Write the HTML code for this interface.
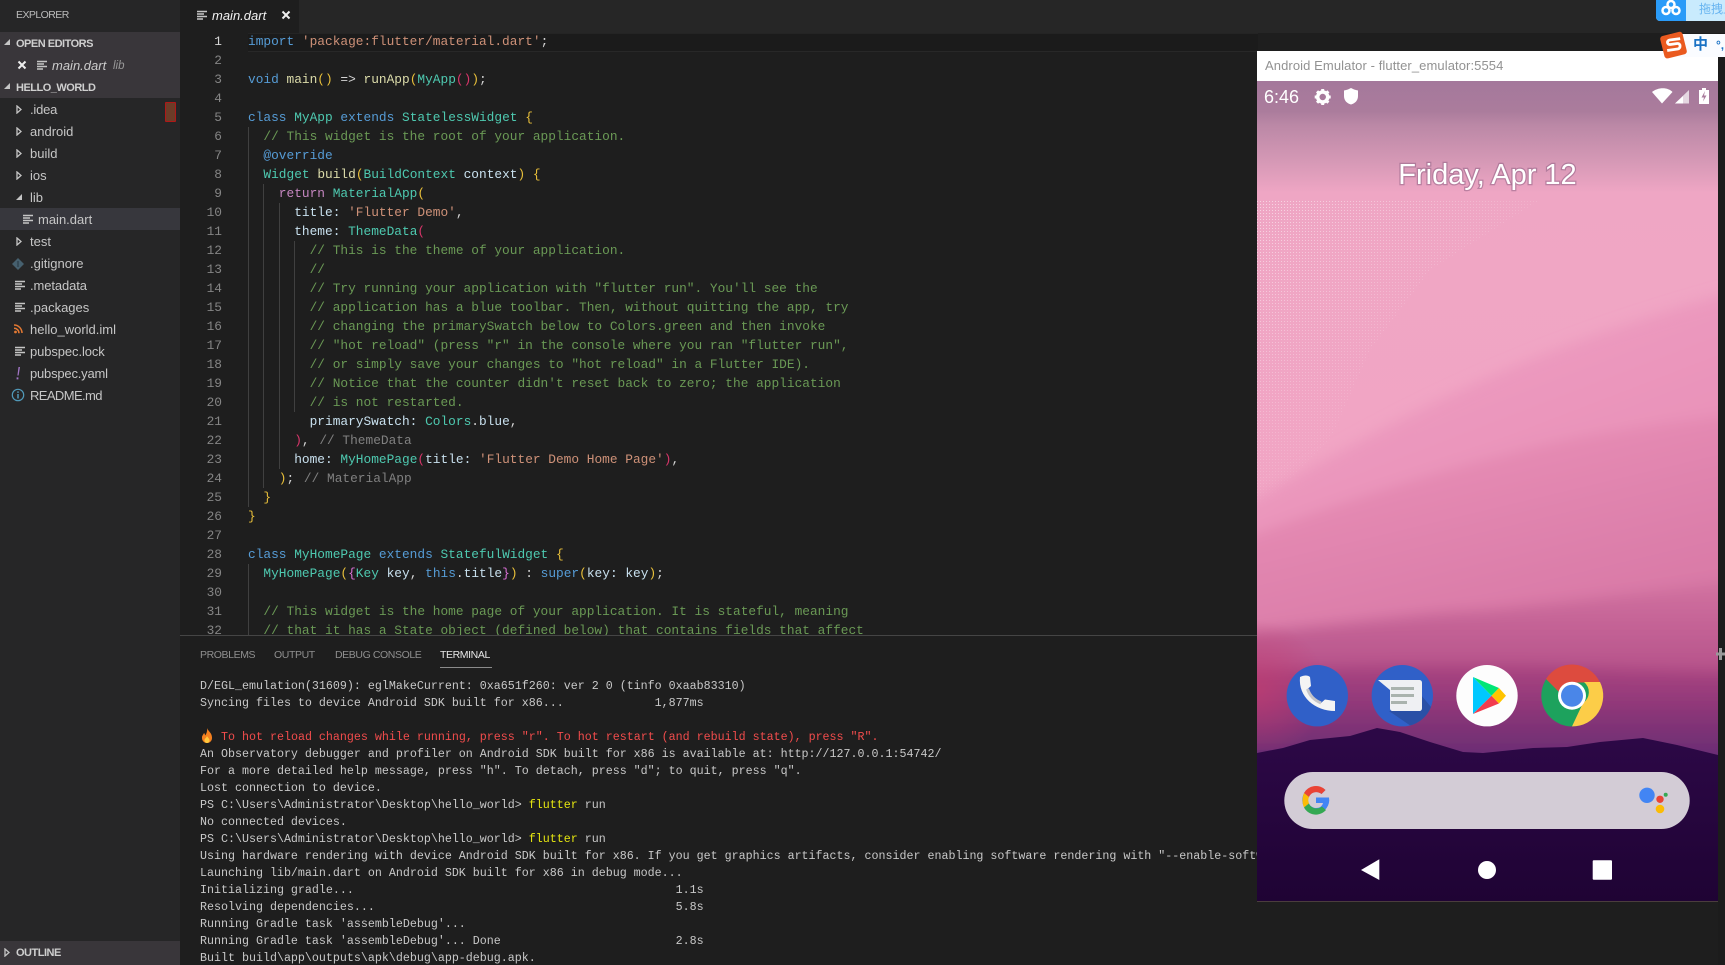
<!DOCTYPE html>
<html><head><meta charset="utf-8"><style>
html,body{margin:0;padding:0;background:#1e1e1e;width:1725px;height:965px;overflow:hidden}
#r{position:relative;width:1725px;height:965px;overflow:hidden;font-family:"Liberation Sans",sans-serif}
#r div,#r svg{position:absolute}
.side{left:0;top:0;width:180px;height:965px;background:#262627}
.hd{left:0;width:180px;background:#39363a}
.s{white-space:pre;font-size:13px;line-height:22px;height:22px;color:#c6c6c6;margin-top:1px}
.h{white-space:pre;font-weight:bold;font-size:11px;letter-spacing:-.5px;line-height:22px;height:22px;color:#cfcfcf;left:16px;margin-top:1px}
.code{left:248px;height:19px;line-height:19px;font:12.83px/19px "Liberation Mono",monospace;white-space:pre;color:#d4d4d4}
.n{left:190px;width:32px;text-align:right;height:19px;font:12.83px/19px "Liberation Mono",monospace;color:#858585}
.g{width:1px;background:#404040}
.t{left:200px;height:17px;font:11.67px/17px "Liberation Mono",monospace;white-space:pre;color:#c8c8c8;margin-top:1px}
.k{color:#569cd6}.st{color:#ce9178}.ty{color:#4ec9b0}.f{color:#dcdcaa}.c{color:#6a9955}.r{color:#c586c0}.v{color:#c8e0ee}
.y{color:#e8bf3a}.p{color:#d8356a}.m{color:#da70d6}.l{color:#808080;margin-left:2px}
.tab{top:645px;font-size:10.5px;line-height:18px;height:18px;letter-spacing:-.4px;color:#8f8f8f;white-space:pre;margin-top:1px}
.yl{color:#e5e510}
</style></head><body><div id="r">
<svg width="0" height="0" style="left:0;top:0"><defs>
<g id="fi"><path d="M0 1.500h10M0 4h7M0 6.500h10M0 9h6" stroke="#c5c5c5" stroke-width="1.500" fill="none"/></g>
<g id="ar"><path d="M1 1l4 3.500-4 3.500z" fill="none" stroke="#c5c5c5" stroke-width="1.300"/></g>
<g id="ad"><path d="M6 0v6H0z" fill="#c5c5c5"/></g>
</defs></svg>

<!-- tab bar -->
<div style="left:180px;top:0;width:1545px;height:33px;background:#262626"></div>
<div style="left:180px;top:0;width:119px;height:33px;background:#1e1e1e"></div>
<svg style="left:197px;top:10px" width="11" height="11"><use href="#fi"/></svg>
<div class="s" style="left:212px;top:4px;color:#f2f2f2;font-style:italic;font-size:13px">main.dart</div>
<svg style="left:281px;top:10px" width="10" height="10"><path d="M1.500 1.500l7 7M8.500 1.500l-7 7" stroke="#eee" stroke-width="2"/></svg>

<!-- sidebar -->
<div class="side"></div>
<div class="s" style="left:16px;top:3px;font-size:10.500px;letter-spacing:-.55px;color:#bbb">EXPLORER</div>
<div class="hd" style="top:32px;height:66px"></div>
<div class="hd" style="top:941px;height:24px"></div>
<div style="left:0;top:208px;width:180px;height:22px;background:#37373d"></div>
<svg style="left:4px;top:39px" width="7" height="7"><use href="#ad"/></svg>
<div class="h" style="top:32px">OPEN EDITORS</div>
<svg style="left:17px;top:60px" width="10" height="10"><path d="M1.500 1.500l7 7M8.500 1.500l-7 7" stroke="#eee" stroke-width="2"/></svg>
<svg style="left:37px;top:60px" width="11" height="11"><use href="#fi"/></svg>
<div class="s" style="left:52px;top:54px;font-style:italic;color:#ccc">main.dart</div>
<div class="s" style="left:113px;top:54px;font-style:italic;color:#999;font-size:11.500px">lib</div>
<svg style="left:4px;top:83px" width="7" height="7"><use href="#ad"/></svg>
<div class="h" style="top:76px">HELLO_WORLD</div>

<svg style="left:16px;top:105px" width="7" height="9"><use href="#ar"/></svg><div class="s" style="left:30px;top:98px;letter-spacing:-.2px">.idea</div>
<div style="left:165px;top:102px;width:9px;height:18px;background:#6c3c28;border:1px solid #b01818;border-radius:1px"></div>
<svg style="left:16px;top:127px" width="7" height="9"><use href="#ar"/></svg><div class="s" style="left:30px;top:120px">android</div>
<svg style="left:16px;top:149px" width="7" height="9"><use href="#ar"/></svg><div class="s" style="left:30px;top:142px">build</div>
<svg style="left:16px;top:171px" width="7" height="9"><use href="#ar"/></svg><div class="s" style="left:30px;top:164px">ios</div>
<svg style="left:16px;top:194px" width="7" height="7"><use href="#ad"/></svg><div class="s" style="left:30px;top:186px">lib</div>
<svg style="left:23px;top:214px" width="11" height="11"><use href="#fi"/></svg><div class="s" style="left:38px;top:208px">main.dart</div>
<svg style="left:16px;top:237px" width="7" height="9"><use href="#ar"/></svg><div class="s" style="left:30px;top:230px">test</div>
<svg style="left:12px;top:258px" width="12" height="12"><path d="M6 0l6 6-6 6-6-6z" fill="#46606f"/><path d="M6 3v6" stroke="#2c3e4a" stroke-width="1.300"/></svg><div class="s" style="left:30px;top:252px">.gitignore</div>
<svg style="left:15px;top:280px" width="11" height="11"><use href="#fi"/></svg><div class="s" style="left:30px;top:274px;letter-spacing:-.1px">.metadata</div>
<svg style="left:15px;top:302px" width="11" height="11"><use href="#fi"/></svg><div class="s" style="left:30px;top:296px">.packages</div>
<svg style="left:14px;top:324px" width="9" height="10"><circle cx="1.500" cy="8" r="1.400" fill="#e37933"/><path d="M0 4.200a5 5 0 0 1 5 5M0 1a8 8 0 0 1 8 8" stroke="#e37933" stroke-width="1.500" fill="none"/></svg><div class="s" style="left:30px;top:318px">hello_world.iml</div>
<svg style="left:15px;top:346px" width="11" height="11"><use href="#fi"/></svg><div class="s" style="left:30px;top:340px;letter-spacing:-.1px">pubspec.lock</div>
<svg style="left:15px;top:367px" width="6" height="13"><path d="M3.500 0L5 0 3.600 8.500H2.400zM1.600 10.400h1.800v2H1.600z" fill="#a074c4"/></svg><div class="s" style="left:30px;top:362px;letter-spacing:-.2px">pubspec.yaml</div>
<svg style="left:11px;top:388px" width="14" height="14"><circle cx="7" cy="7" r="5.700" fill="none" stroke="#519aba" stroke-width="1.200"/><path d="M7 6v4.500M7 3.400v1.500" stroke="#519aba" stroke-width="1.500"/></svg><div class="s" style="left:30px;top:384px;letter-spacing:-.6px">README.md</div>
<svg style="left:4px;top:948px" width="7" height="9"><use href="#ar"/></svg>
<div class="h" style="top:941px">OUTLINE</div>

<!-- editor -->
<div style="left:248px;top:33px;width:1010px;height:17px;background:#1b1b1b;border-top:1px solid #242424;border-bottom:1px solid #282828"></div>
<div class="g" style="left:248px;top:127px;height:380px"></div>
<div class="g" style="left:263px;top:184px;height:304px"></div>
<div class="g" style="left:279px;top:203px;height:266px"></div>
<div class="g" style="left:294px;top:241px;height:171px"></div>
<div class="g" style="left:248px;top:564px;height:71px"></div>

<div class="n" style="top:32px;color:#d6d6d6">1</div><div class="code" style="top:32px"><span class="k">import</span> <span class="st">'package:flutter/material.dart'</span>;</div>
<div class="n" style="top:51px">2</div>
<div class="n" style="top:70px">3</div><div class="code" style="top:70px"><span class="k">void</span> <span class="f">main</span><span class="y">()</span> =&gt; <span class="f">runApp</span><span class="y">(</span><span class="ty">MyApp</span><span class="p">()</span><span class="y">)</span>;</div>
<div class="n" style="top:89px">4</div>
<div class="n" style="top:108px">5</div><div class="code" style="top:108px"><span class="k">class</span> <span class="ty">MyApp</span> <span class="k">extends</span> <span class="ty">StatelessWidget</span> <span class="y">{</span></div>
<div class="n" style="top:127px">6</div><div class="code" style="top:127px">  <span class="c">// This widget is the root of your application.</span></div>
<div class="n" style="top:146px">7</div><div class="code" style="top:146px">  <span class="k">@override</span></div>
<div class="n" style="top:165px">8</div><div class="code" style="top:165px">  <span class="ty">Widget</span> <span class="f">build</span><span class="y">(</span><span class="ty">BuildContext</span> <span class="v">context</span><span class="y">)</span> <span class="y">{</span></div>
<div class="n" style="top:184px">9</div><div class="code" style="top:184px">    <span class="r">return</span> <span class="ty">MaterialApp</span><span class="y">(</span></div>
<div class="n" style="top:203px">10</div><div class="code" style="top:203px">      <span class="v">title:</span> <span class="st">'Flutter Demo'</span>,</div>
<div class="n" style="top:222px">11</div><div class="code" style="top:222px">      <span class="v">theme:</span> <span class="ty">ThemeData</span><span class="p">(</span></div>
<div class="n" style="top:241px">12</div><div class="code" style="top:241px">        <span class="c">// This is the theme of your application.</span></div>
<div class="n" style="top:260px">13</div><div class="code" style="top:260px">        <span class="c">//</span></div>
<div class="n" style="top:279px">14</div><div class="code" style="top:279px">        <span class="c">// Try running your application with "flutter run". You'll see the</span></div>
<div class="n" style="top:298px">15</div><div class="code" style="top:298px">        <span class="c">// application has a blue toolbar. Then, without quitting the app, try</span></div>
<div class="n" style="top:317px">16</div><div class="code" style="top:317px">        <span class="c">// changing the primarySwatch below to Colors.green and then invoke</span></div>
<div class="n" style="top:336px">17</div><div class="code" style="top:336px">        <span class="c">// "hot reload" (press "r" in the console where you ran "flutter run",</span></div>
<div class="n" style="top:355px">18</div><div class="code" style="top:355px">        <span class="c">// or simply save your changes to "hot reload" in a Flutter IDE).</span></div>
<div class="n" style="top:374px">19</div><div class="code" style="top:374px">        <span class="c">// Notice that the counter didn't reset back to zero; the application</span></div>
<div class="n" style="top:393px">20</div><div class="code" style="top:393px">        <span class="c">// is not restarted.</span></div>
<div class="n" style="top:412px">21</div><div class="code" style="top:412px">        <span class="v">primarySwatch:</span> <span class="ty">Colors</span>.<span class="v">blue</span>,</div>
<div class="n" style="top:431px">22</div><div class="code" style="top:431px">      <span class="p">)</span>, <span class="l">// ThemeData</span></div>
<div class="n" style="top:450px">23</div><div class="code" style="top:450px">      <span class="v">home:</span> <span class="ty">MyHomePage</span><span class="p">(</span><span class="v">title:</span> <span class="st">'Flutter Demo Home Page'</span><span class="p">)</span>,</div>
<div class="n" style="top:469px">24</div><div class="code" style="top:469px">    <span class="y">)</span>; <span class="l">// MaterialApp</span></div>
<div class="n" style="top:488px">25</div><div class="code" style="top:488px">  <span class="y">}</span></div>
<div class="n" style="top:507px">26</div><div class="code" style="top:507px"><span class="y">}</span></div>
<div class="n" style="top:526px">27</div>
<div class="n" style="top:545px">28</div><div class="code" style="top:545px"><span class="k">class</span> <span class="ty">MyHomePage</span> <span class="k">extends</span> <span class="ty">StatefulWidget</span> <span class="y">{</span></div>
<div class="n" style="top:564px">29</div><div class="code" style="top:564px">  <span class="ty">MyHomePage</span><span class="y">(</span><span class="m">{</span><span class="ty">Key</span> <span class="v">key</span>, <span class="k">this</span>.<span class="v">title</span><span class="m">}</span><span class="y">)</span> : <span class="k">super</span><span class="y">(</span><span class="v">key:</span> <span class="v">key</span><span class="y">)</span>;</div>
<div class="n" style="top:583px">30</div>
<div class="n" style="top:602px">31</div><div class="code" style="top:602px">  <span class="c">// This widget is the home page of your application. It is stateful, meaning</span></div>
<div class="n" style="top:621px">32</div><div class="code" style="top:621px">  <span class="c">// that it has a State object (defined below) that contains fields that affect</span></div>

<!-- panel -->
<div style="left:180px;top:635px;width:1545px;height:330px;background:#1e1e1e;border-top:1px solid #454545;box-sizing:border-box"></div>
<div class="tab" style="left:200px">PROBLEMS</div>
<div class="tab" style="left:274px">OUTPUT</div>
<div class="tab" style="left:335px">DEBUG CONSOLE</div>
<div class="tab" style="left:440px;color:#e7e7e7">TERMINAL</div>
<div style="left:440px;top:667px;width:52px;height:1px;background:#8a8a8a"></div>

<div class="t" style="top:677px">D/EGL_emulation(31609): eglMakeCurrent: 0xa651f260: ver 2 0 (tinfo 0xaab83310)</div>
<div class="t" style="top:694px">Syncing files to device Android SDK built for x86...             1,877ms</div>
<svg style="left:200px;top:728px" width="14" height="15"><path d="M7 0c1 3 5 5 5 9.500A5 5 0 0 1 7 15a5 5 0 0 1-5-5.500C2 7.500 3.500 6.500 4 5c.8.700 1 1.500 1 2.500C6.500 6 7.500 3 7 0z" fill="#f4801f"/><path d="M7 8c.5 1.500 2.500 2.500 2.500 4.300A2.500 2.500 0 0 1 7 15a2.500 2.500 0 0 1-2.500-2.700C4.500 10.500 6.500 10 7 8z" fill="#ffc83d"/></svg>
<div class="t" style="top:728px;left:221px;color:#f14c4c">To hot reload changes while running, press "r". To hot restart (and rebuild state), press "R".</div>
<div class="t" style="top:745px">An Observatory debugger and profiler on Android SDK built for x86 is available at: http://127.0.0.1:54742/</div>
<div class="t" style="top:762px">For a more detailed help message, press "h". To detach, press "d"; to quit, press "q".</div>
<div class="t" style="top:779px">Lost connection to device.</div>
<div class="t" style="top:796px">PS C:\Users\Administrator\Desktop\hello_world&gt; <span class="yl">flutter</span> run</div>
<div class="t" style="top:813px">No connected devices.</div>
<div class="t" style="top:830px">PS C:\Users\Administrator\Desktop\hello_world&gt; <span class="yl">flutter</span> run</div>
<div class="t" style="top:847px">Using hardware rendering with device Android SDK built for x86. If you get graphics artifacts, consider enabling software rendering with "--enable-software-rendering".</div>
<div class="t" style="top:864px">Launching lib/main.dart on Android SDK built for x86 in debug mode...</div>
<div class="t" style="top:881px">Initializing gradle...                                              1.1s</div>
<div class="t" style="top:898px">Resolving dependencies...                                           5.8s</div>
<div class="t" style="top:915px">Running Gradle task 'assembleDebug'...</div>
<div class="t" style="top:932px">Running Gradle task 'assembleDebug'... Done                         2.8s</div>
<div class="t" style="top:949px">Built build\app\outputs\apk\debug\app-debug.apk.</div>

<!-- emulator -->
<div style="left:1257px;top:51px;width:461px;height:30px;background:#fff"></div>
<div style="left:1265px;top:56px;height:20px;line-height:20px;font-size:13px;color:#929292;white-space:pre;letter-spacing:.09px">Android Emulator - flutter_emulator:5554</div>
<svg style="left:1257px;top:81px" width="461" height="820" viewBox="1257 81 461 820">
<defs>
<linearGradient id="w0" x1="0" y1="81" x2="0" y2="420" gradientUnits="userSpaceOnUse">
<stop offset="0" stop-color="#a4789b"/><stop offset=".09" stop-color="#ab7c9c"/><stop offset=".13" stop-color="#bb88a6"/><stop offset=".24" stop-color="#d699b6"/><stop offset=".33" stop-color="#efa6c4"/><stop offset="1" stop-color="#f1a5c4"/>
</linearGradient>
<linearGradient id="w1" x1="1400" y1="300" x2="1500" y2="560" gradientUnits="userSpaceOnUse"><stop offset="0" stop-color="#ee9fc2"/><stop offset="1" stop-color="#e88fb7"/></linearGradient>
<linearGradient id="w2" x1="1400" y1="430" x2="1450" y2="640" gradientUnits="userSpaceOnUse"><stop offset="0" stop-color="#e88fb6"/><stop offset="1" stop-color="#d97aa7"/></linearGradient>
<linearGradient id="w3" x1="0" y1="590" x2="0" y2="690" gradientUnits="userSpaceOnUse"><stop offset="0" stop-color="#cf6f9e"/><stop offset="1" stop-color="#b04c86"/></linearGradient>
<linearGradient id="w4" x1="0" y1="670" x2="0" y2="770" gradientUnits="userSpaceOnUse"><stop offset="0" stop-color="#a84380"/><stop offset=".4" stop-color="#8c3678"/><stop offset="1" stop-color="#5f2a72"/></linearGradient>
<linearGradient id="w5" x1="0" y1="740" x2="0" y2="901" gradientUnits="userSpaceOnUse"><stop offset="0" stop-color="#2c0846"/><stop offset="1" stop-color="#1f0334"/></linearGradient>
<pattern id="dt" width="3" height="3" patternUnits="userSpaceOnUse"><rect width="1" height="1" fill="#fff"/></pattern>
<linearGradient id="fd" x1="1257" y1="205" x2="1480" y2="420" gradientUnits="userSpaceOnUse"><stop offset="0" stop-color="#fff" stop-opacity=".7"/><stop offset=".7" stop-color="#fff" stop-opacity=".12"/><stop offset="1" stop-color="#fff" stop-opacity="0"/></linearGradient>
<mask id="dm" maskUnits="userSpaceOnUse" x="1257" y="190" width="400" height="340"><rect x="1257" y="190" width="400" height="340" fill="url(#fd)"/></mask>
<filter id="bl" filterUnits="userSpaceOnUse" x="1200" y="250" width="600" height="600"><feGaussianBlur stdDeviation="7"/></filter>
<radialGradient id="redg" cx="1257" cy="690" r="70" gradientUnits="userSpaceOnUse"><stop offset="0" stop-color="#c23d70" stop-opacity=".7"/><stop offset="1" stop-color="#c23d70" stop-opacity="0"/></radialGradient>
</defs>
<rect x="1257" y="81" width="461" height="820" fill="url(#w0)"/>
<polygon points="1257,200 1540,200 1430,270 1370,350 1330,440 1270,500 1257,505" fill="url(#dt)" mask="url(#dm)" opacity=".75"/>
<g filter="url(#bl)">
<path d="M1200 530C1380 430 1500 350 1780 280V800H1200z" fill="url(#w1)"/>
<path d="M1200 555C1340 500 1440 470 1510 453C1580 433 1650 425 1780 410V800H1200z" fill="url(#w2)"/>
<path d="M1200 636C1340 625 1420 612 1483 610C1570 602 1650 590 1780 576V800H1200z" fill="url(#w3)"/>
<path d="M1200 675C1320 665 1400 665 1480 665C1580 665 1660 672 1780 672V800H1200z" fill="url(#w4)"/>
</g>
<rect x="1257" y="620" width="90" height="130" fill="url(#redg)"/>
<path d="M1257 753L1283 748L1310 740L1350 736L1377 728L1400 732L1430 742L1463 752L1483 753L1533 748L1567 747L1600 742L1643 738L1677 745L1718 755V901H1257z" fill="url(#w5)"/>

<!-- status -->
<text x="1264" y="103" font-family="Liberation Sans" font-size="18" fill="#fff">6:46</text>
<g transform="translate(1322.700,97)" fill="#fff"><circle r="5" fill="none" stroke="#fff" stroke-width="3.500"/><path id="gt" d="M-1.500-8h3v3h-3zM-1.500 5h3v3h-3zM-8-1.500h3v3h-3zM5-1.500h3v3h-3z"/><path d="M-1.500-8h3v3h-3zM-1.500 5h3v3h-3zM-8-1.500h3v3h-3zM5-1.500h3v3h-3z" transform="rotate(45)"/></g>
<path d="M1344 90.500C1347 90 1349 89 1351 88C1353 89 1355 90 1358 90.500V96C1358 100.500 1355 103.500 1351 104.500C1347 103.500 1344 100.500 1344 96z" fill="#fff"/>
<path d="M1652 92C1658 87 1668 87 1672.500 92L1662 103.500z" fill="#fff"/>
<path d="M1675 103.500L1689 103.500V90z" fill="#fff" opacity=".7"/>
<path d="M1675 103.500H1683V96z" fill="#fff"/>
<path d="M1699 90h3v-2h4v2h3v14h-10z" fill="#fff"/><path d="M1705 91l-3.500 6.500h2.500l-1 4 3.500-6h-2.500z" fill="#a97c9c"/>
<text x="1487.500" y="184" text-anchor="middle" font-family="Liberation Sans" font-size="29" fill="#fff" style="paint-order:stroke" stroke="#8a5b80" stroke-opacity=".5" stroke-width="2.500">Friday, Apr 12</text>

<!-- dock -->
<circle cx="1317.300" cy="695.700" r="30.700" fill="#3060c8"/>
<path d="M1300 677C1304 675 1308 675 1310 677L1311 686L1307.500 689C1310 696 1314 700 1321 703L1325 699.500L1335 701V711C1315 711 1298 697 1300 677z" fill="#f4f4f4"/>
<path d="M1307.500 689C1310 696 1314 700 1321 703" stroke="#c4c4c8" stroke-width="3" fill="none"/>
<circle cx="1402.300" cy="695.700" r="30.700" fill="#3060c8"/>
<path d="M1389 711H1418L1421 695L1431 707A30.700 30.700 0 0 1 1410 725.400z" fill="#2a50a6"/>
<path d="M1378 680H1419C1421 680 1422 681 1422 683V708C1422 710 1421 711 1419 711H1393C1391 711 1390 710 1390 708V690z" fill="#eff0f3"/>
<path d="M1391 688.500h23M1391 695.500h23M1391 702.500h16" stroke="#aab3ae" stroke-width="3"/>
<circle cx="1487" cy="695.700" r="30.700" fill="#fdfdfd"/>
<path d="M1473 677L1473 714L1491.500 695.700z" fill="#00c8ff"/>
<path d="M1473 677L1491.500 695.700L1499 688z" fill="#00e676"/>
<path d="M1473 714L1491.500 695.700L1499 703.500z" fill="#f23c4e"/>
<path d="M1491.500 695.700L1499 688L1506 695.700L1499 703.500z" fill="#ffc400"/>
<circle cx="1572" cy="695.700" r="30.700" fill="#1da25d"/>
<path d="M1546 679A30.700 30.700 0 0 1 1600 682.500H1572A13 13 0 0 0 1560 693z" fill="#dd4b3e"/>
<path d="M1600 682A30.700 30.700 0 0 1 1572 726.400L1583 703A13 13 0 0 0 1584 682z" fill="#fccd48"/>
<circle cx="1572" cy="695.700" r="14" fill="#fff"/><circle cx="1572" cy="695.700" r="11" fill="#4a86e8"/>

<!-- search -->
<rect x="1284.300" y="772" width="405.400" height="57" rx="28.500" fill="#d3ccd6"/>
<path d="M1327.500 797.500H1316V803H1323C1322 806.500 1319.500 808 1316 808A8 8 0 0 1 1316 792C1318 792 1320 793 1321.500 794L1325.500 790C1323 787.800 1319.500 786.500 1316 786.500A13.500 13.500 0 1 0 1329 797.500z" fill="#4285f4"/>
<path d="M1304 793A13.500 13.500 0 0 1 1325.500 790L1321.500 794C1317 790.500 1311 792 1309 797z" fill="#ea4335"/>
<path d="M1304 793L1309 797C1308 799 1308 801 1309 803.500L1304 807.500C1302 803 1302 798 1304 793z" fill="#fbbc05"/>
<path d="M1304 807.500L1309 803.500C1311 808.500 1317.500 810 1322 806.500L1326 810A13.500 13.500 0 0 1 1304 807.500z" fill="#34a853"/>
<circle cx="1647" cy="795.300" r="7.700" fill="#4285f4"/><circle cx="1660" cy="799.300" r="3.700" fill="#ea4335"/><circle cx="1660" cy="809" r="4.300" fill="#fbbc05"/><circle cx="1665.700" cy="794.700" r="2" fill="#34a853"/>

<!-- nav -->
<path d="M1361 870L1379.300 859.300V880z" fill="#fff"/>
<circle cx="1487" cy="870" r="9" fill="#fff"/>
<rect x="1592.700" y="860.300" width="19.300" height="19.400" rx="1" fill="#fff"/>
</svg>
<div style="left:1257px;top:901px;width:461px;height:1px;background:#4a3d3d"></div>
<div style="left:1718px;top:33px;width:7px;height:932px;background:#1c1c1c"></div>
<svg style="left:1716px;top:648px" width="9" height="12"><path d="M4.500 0v12M0 6h9" stroke="#999" stroke-width="3"/></svg>

<!-- top right widgets -->
<div style="left:1656px;top:0;width:69px;height:21px;background:#c9ebfd;border-radius:0 0 0 4px"></div>
<div style="left:1656px;top:0;width:30px;height:21px;background:#2a9bf8;border-radius:0 0 0 4px"></div>
<svg style="left:1661px;top:0" width="20" height="16"><g fill="none" stroke="#fff" stroke-width="2.500"><circle cx="10" cy="4.500" r="3.500"/><circle cx="5" cy="10.500" r="3.500"/><circle cx="15" cy="10.500" r="3.500"/></g></svg>
<div style="left:1699px;top:1px;height:16px;line-height:16px;font-size:12px;color:#67b4f0;white-space:pre;font-family:'Liberation Sans','Noto Sans CJK SC',sans-serif">拖拽上传</div>
<div style="left:1670px;top:34px;width:55px;height:23px;background:#fafcff"></div>
<svg style="left:1659px;top:30px" width="30" height="30"><rect x="3" y="3.500" width="23" height="23" rx="3" transform="rotate(-14 15 15)" fill="#ea5a1f"/><path d="M22 9.500H11.500C8 9.500 8 14 11.500 14H18.500C22 14 21.500 19.500 18 19.500H7.500" fill="none" stroke="#fff" stroke-width="2.800" transform="rotate(-8 15 15)"/></svg>
<div style="left:1693px;top:35px;height:20px;line-height:20px;font-size:15px;font-weight:bold;color:#1a72c4;white-space:pre;font-family:'Liberation Sans','Noto Sans CJK SC',sans-serif">中</div>
<div style="left:1716px;top:35px;height:20px;line-height:20px;font-size:12px;font-weight:bold;color:#1a72c4;white-space:pre">°,</div>
</div></body></html>
